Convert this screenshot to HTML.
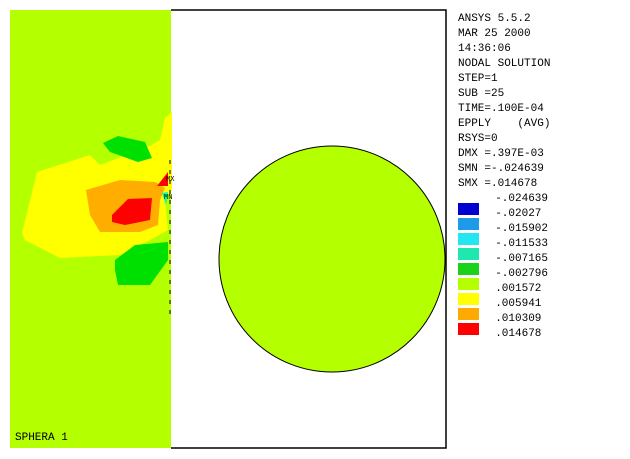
<!DOCTYPE html>
<html><head><style>
body{margin:0;width:630px;height:459px;background:#fff;overflow:hidden;position:relative;font-family:"Liberation Mono",monospace;}
.t{position:absolute;left:458px;font-size:11px;line-height:15px;color:#000;white-space:pre;}
.s{position:absolute;left:458px;width:21px;height:12px;}
</style></head><body>
<svg width="630" height="459" style="position:absolute;left:0;top:0">
<rect x="10" y="10" width="161" height="438" fill="#b4ff00"/>
<polygon points="22,233 37,172 90,155 100,165 145,148 160,140 165,118 172,112 172,190 165,200 168,230 150,240 120,255 60,258 25,240" fill="#ffff00"/>
<polygon points="103,143 118,136 145,142 152,158 138,162 110,152" fill="#00e000"/>
<polygon points="86,190 120,180 155,182 165,188 160,200 158,225 140,232 100,232 90,215" fill="#ffae00"/>
<polygon points="112,215 128,199 152,198 150,220 125,225 112,222" fill="#ff0000"/>
<polygon points="157,186 168,172 168,186" fill="#ff0000"/>
<polygon points="115,260 135,245 168,242 168,260 150,285 118,285 115,270" fill="#00e000"/>
<polygon points="138,255 168,243 150,250" fill="#00ffb0"/>
<polygon points="162,193 168,192 166,205" fill="#00ffb0"/>
<polyline points="171,10 446,10 446,448 171,448" fill="none" stroke="#000" stroke-width="1.5"/>
<line x1="170" y1="160" x2="170" y2="320" stroke="#000" stroke-dasharray="4,6"/>
<circle cx="332" cy="259" r="113" fill="#b4ff00" stroke="#000" stroke-width="1"/>
<text x="166" y="181" font-size="7" font-family="Liberation Mono">MX</text>
<text x="164" y="199" font-size="7" font-family="Liberation Mono">MN</text>
<text x="15" y="440" font-size="11" font-family="Liberation Mono">SPHERA 1</text>
</svg>
<div class="t" style="top:12px">ANSYS 5.5.2
MAR 25 2000
14:36:06
NODAL SOLUTION
STEP=1
SUB =25
TIME=.100E-04
EPPLY    (AVG)
RSYS=0
DMX =.397E-03
SMN =-.024639
SMX =.014678</div>
<div class="s" style="top:203px;background:#0000d0"></div>
<div class="s" style="top:218px;background:#1e9be8"></div>
<div class="s" style="top:233px;background:#22e6f0"></div>
<div class="s" style="top:248px;background:#1ee8b0"></div>
<div class="s" style="top:263px;background:#1ad21a"></div>
<div class="s" style="top:278px;background:#b4ff00"></div>
<div class="s" style="top:293px;background:#ffff00"></div>
<div class="s" style="top:308px;background:#ffaa00"></div>
<div class="s" style="top:323px;background:#ff0000"></div>
<div class="t" style="left:482px;top:192px">  -.024639
  -.02027
  -.015902
  -.011533
  -.007165
  -.002796
  .001572
  .005941
  .010309
  .014678</div>
</body></html>
